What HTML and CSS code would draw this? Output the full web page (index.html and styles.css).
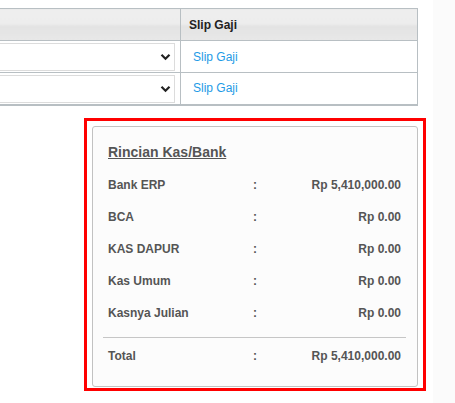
FILE: index.html
```html
<!DOCTYPE html>
<html>
<head>
<meta charset="utf-8">
<link rel="stylesheet" href="styles.css">
</head>
<body>
<div class="page">
  <div class="grid-wrap">
    <table class="grid">
      <thead>
        <tr><th class="col-sel"></th><th class="col-slip">Slip Gaji</th></tr>
      </thead>
      <tbody>
        <tr>
          <td class="col-sel"><div class="select"><svg class="chev" width="11" height="8" viewBox="0 0 11 8"><path d="M1.5 1.8 L5.5 5.8 L9.5 1.8" fill="none" stroke="#222" stroke-width="2.2"/></svg></div></td>
          <td class="col-slip"><a class="link" href="#">Slip Gaji</a></td>
        </tr>
        <tr>
          <td class="col-sel"><div class="select"><svg class="chev" width="11" height="8" viewBox="0 0 11 8"><path d="M1.5 1.8 L5.5 5.8 L9.5 1.8" fill="none" stroke="#222" stroke-width="2.2"/></svg></div></td>
          <td class="col-slip"><a class="link" href="#">Slip Gaji</a></td>
        </tr>
      </tbody>
    </table>
  </div>

  <div class="outline">
    <div class="panel">
      <div class="title">Rincian Kas/Bank</div>
      <div class="rows first">
        <div class="lbl">Bank ERP</div><div class="sep">:</div><div class="val">Rp 5,410,000.00</div>
        <div class="lbl">BCA</div><div class="sep">:</div><div class="val">Rp 0.00</div>
        <div class="lbl">KAS DAPUR</div><div class="sep">:</div><div class="val">Rp 0.00</div>
        <div class="lbl">Kas Umum</div><div class="sep">:</div><div class="val">Rp 0.00</div>
        <div class="lbl">Kasnya Julian</div><div class="sep">:</div><div class="val">Rp 0.00</div>
      </div>
      <div class="divider"></div>
      <div class="rows">
        <div class="lbl">Total</div><div class="sep">:</div><div class="val">Rp 5,410,000.00</div>
      </div>
    </div>
  </div>
</div>
</body>
</html>
```

FILE: styles.css
```css
* { box-sizing: border-box; }
html, body { margin: 0; padding: 0; }
body {
  font-family: "Liberation Sans", Arial, sans-serif;
  font-size: 12px;
  color: #555;
  width: 455px;
  height: 403px;
  overflow: hidden;
  background: linear-gradient(to right, #ffffff 0, #ffffff 433px, #fbfbfb 433px, #fbfbfb 100%);
}
.page { padding-top: 8px; }
.grid-wrap { overflow: visible; }
.grid {
  border-collapse: collapse;
  margin-left: -301px;
  table-layout: fixed;
  width: 718px;
  border-top: 1px solid #b8bfc3;
  border-right: 1px solid #b8bfc3;
  border-bottom: 2px solid #b8bfc3;
}
.grid th, .grid td {
  border: 1px solid #b8bfc3;
  padding: 0;
  text-align: left;
  vertical-align: middle;
}
.grid th {
  height: 32px;
  background: linear-gradient(#eeeeee 0, #ededed 45%, #e3e3e3 55%, #e8e8e8 100%);
  color: #222;
  font-weight: bold;
  padding-left: 8px;
}
.grid td { height: 32px; }
.grid th.col-sel { width: 481px; }
.grid td.col-sel { padding: 1px 5px 0 0; }
.grid th.col-slip { width: 237px; }
.grid td.col-slip { padding-left: 12px; }
.select {
  height: 28px;
  border: 1px solid #dcdcdc;
  background: #fff;
  display: flex;
  align-items: center;
  justify-content: flex-end;
  padding-right: 3px;
}
.chev { display: block; }
.link {
  color: #1e9be6;
  text-decoration: none;
}
.outline {
  position: absolute;
  left: 84px;
  top: 118px;
  width: 342px;
  border: 3px solid #ff0000;
  padding: 5px 5px 1px 5px;
}
.panel {
  border: 1px solid #c2c2c2;
  border-radius: 3px;
  background: #fcfcfc;
  padding: 9px 11px 14px 10px;
}
.title {
  height: 32px;
  line-height: 32px;
  font-size: 14px;
  font-weight: bold;
  text-decoration: underline;
  padding-left: 5px;
  color: #555;
}
.rows {
  display: grid;
  grid-template-columns: 145px 30px 1fr;
  grid-auto-rows: 32px;
  line-height: 32px;
  font-weight: bold;
}
.rows.first { margin-top: 1px; }
.lbl { padding-left: 5px; }
.sep { padding-left: 5px; }
.val { text-align: right; padding-right: 5px; }
.divider {
  height: 1px;
  background: #c6c6c6;
  margin: 8px 0 2px 0;
}
```
